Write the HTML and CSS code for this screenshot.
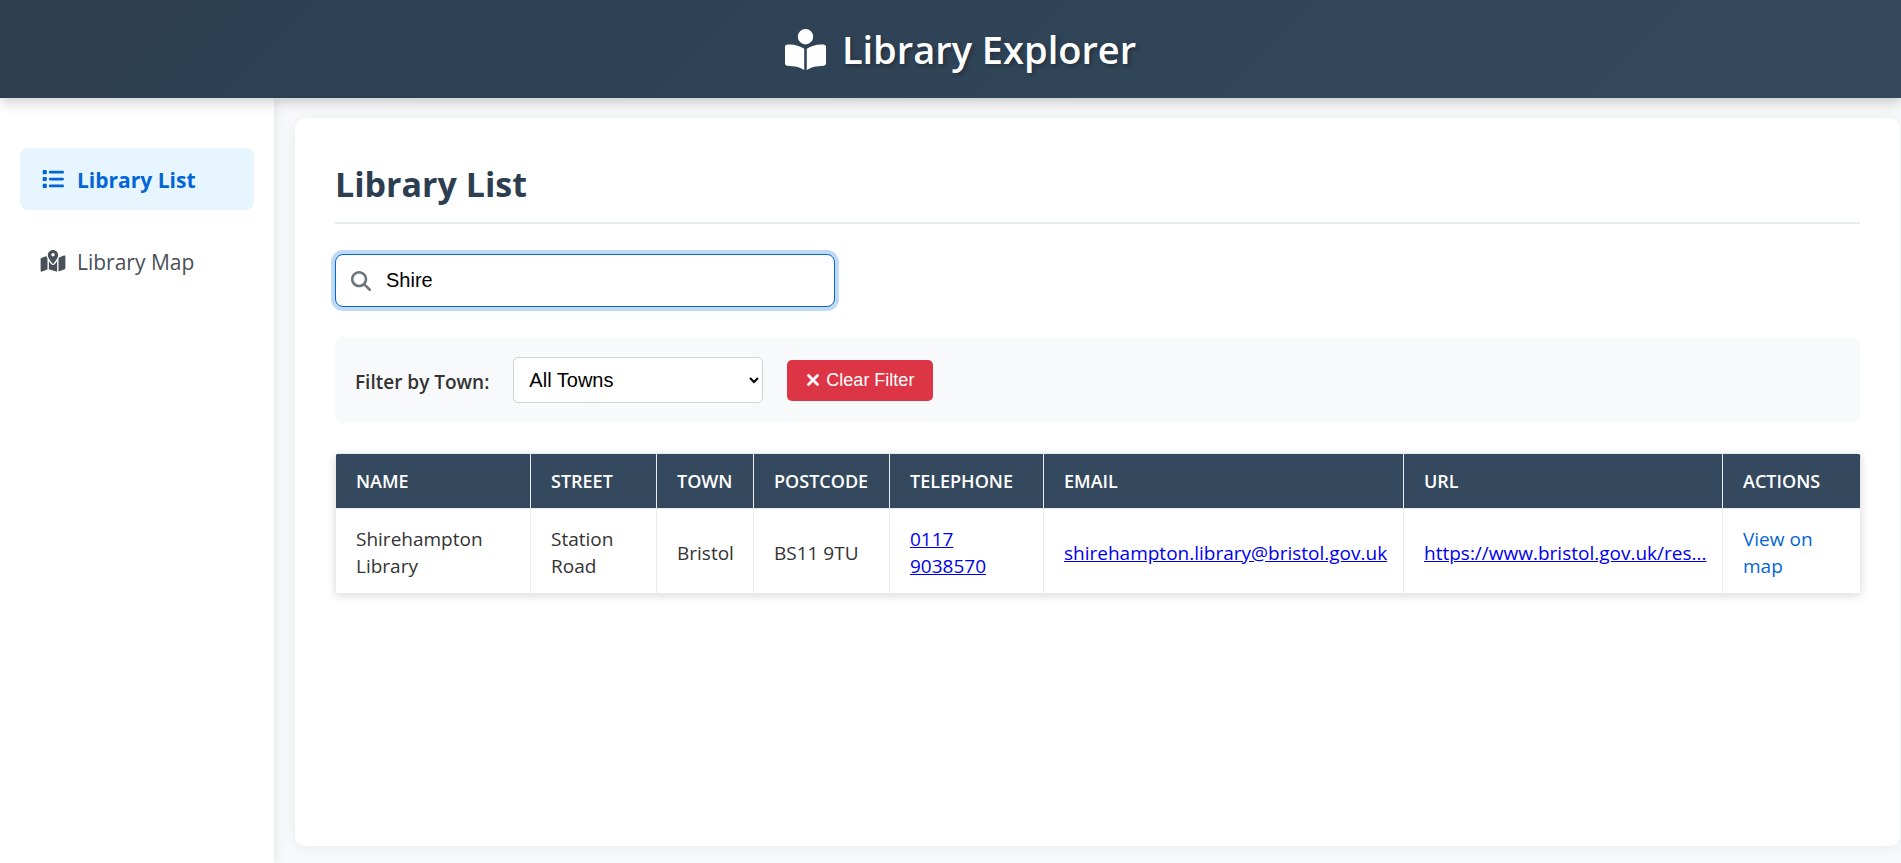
FILE: index.html
```html
<!DOCTYPE html>
<html lang="en">
<head>
<meta charset="utf-8">
<title>Library Explorer</title>
<link rel="stylesheet" href="styles.css">
</head>
<body>
<header class="site-header">
  <svg class="brand-icon" viewBox="0 0 512 512" aria-hidden="true"><path d="M160 96a96 96 0 1 1 192 0A96 96 0 1 1 160 96zm80 152V512l-48.4-24.2c-20.9-10.4-43.5-17-66.8-19.3l-96-9.6C12.5 457.2 0 443.5 0 427V224c0-17.7 14.3-32 32-32H62.3c63.6 0 125.6 19.6 177.7 56zm32 264V248c52.1-36.4 114.1-56 177.7-56H480c17.7 0 32 14.3 32 32V427c0 16.4-12.5 30.2-28.8 31.8l-96 9.6c-23.2 2.3-45.9 8.9-66.8 19.3L272 512z"/></svg>
  <h1 class="brand-title">Library Explorer</h1>
</header>
<div class="layout">
  <nav class="sidebar">
    <a class="nav-link active" href="#list">
      <svg class="nav-icon" viewBox="0 0 512 512" aria-hidden="true"><path d="M40 48C26.700 48 16 58.700 16 72v48c0 13.300 10.700 24 24 24H88c13.300 0 24-10.700 24-24V72c0-13.300-10.700-24-24-24H40zM192 64c-17.700 0-32 14.300-32 32s14.300 32 32 32H480c17.700 0 32-14.300 32-32s-14.300-32-32-32H192zm0 160c-17.700 0-32 14.300-32 32s14.300 32 32 32H480c17.700 0 32-14.300 32-32s-14.300-32-32-32H192zm0 160c-17.700 0-32 14.300-32 32s14.300 32 32 32H480c17.700 0 32-14.300 32-32s-14.300-32-32-32H192zM16 232v48c0 13.300 10.700 24 24 24H88c13.300 0 24-10.700 24-24V232c0-13.300-10.700-24-24-24H40c-13.300 0-24 10.700-24 24zM40 368c-13.300 0-24 10.700-24 24v48c0 13.300 10.700 24 24 24H88c13.300 0 24-10.700 24-24V392c0-13.300-10.700-24-24-24H40z"/></svg>
      <span class="nav-text">Library List</span>
    </a>
    <a class="nav-link" href="#map">
      <svg class="nav-icon" viewBox="0 0 576 512" aria-hidden="true"><path d="M408 120c0 54.6-73.1 151.9-105.2 192c-7.7 9.6-22 9.6-29.600 0C241.1 271.9 168 174.6 168 120C168 53.7 221.7 0 288 0s120 53.7 120 120zm8 80.400c3.500-6.900 6.700-13.800 9.600-20.600c.5-1.200 1-2.500 1.500-3.700l116-46.400C558.9 123.4 576 135 576 152V422.800c0 9.800-6 18.600-15.100 22.300L416 503V200.400zM137.600 138.300c2.400 14.100 7.200 28.300 12.800 41.500c2.900 6.800 6.100 13.700 9.600 20.600V451.800L32.900 502.700C17.100 509 0 497.400 0 480.400V209.600c0-9.800 6-18.600 15.100-22.300l122.600-49zM327.800 332c13.900-17.400 35.700-45.700 56.200-77V504.300L192 449.400V255c20.500 31.300 42.300 59.600 56.200 77c20.500 25.600 59.100 25.600 79.600 0zM288 152a40 40 0 1 0 0-80 40 40 0 1 0 0 80z"/></svg>
      <span class="nav-text">Library Map</span>
    </a>
  </nav>
  <main class="content">
    <section class="card">
      <h2 class="page-title">Library List</h2>
      <div class="search">
        <svg class="search-icon" viewBox="0 0 512 512" aria-hidden="true"><path d="M416 208c0 45.9-14.9 88.3-40 122.700L502.600 457.400c12.500 12.500 12.500 32.800 0 45.300s-32.800 12.500-45.300 0L330.700 376c-34.400 25.200-76.800 40-122.700 40C93.100 416 0 322.900 0 208S93.100 0 208 0S416 93.100 416 208zM208 352a144 144 0 1 0 0-288 144 144 0 1 0 0 288z"/></svg>
        <input class="search-input" type="text" value="Shire" aria-label="Search libraries">
      </div>
      <div class="filters">
        <label class="filter-label" for="town">Filter by Town:</label>
        <select class="filter-select" id="town"><option>All Towns</option><option>Bristol</option></select>
        <button class="clear-button" type="button"><svg class="clear-icon" viewBox="0 0 384 512" aria-hidden="true"><path d="M342.600 150.600c12.500-12.500 12.500-32.800 0-45.300s-32.800-12.500-45.300 0L192 210.700 86.600 105.400c-12.500-12.500-32.800-12.500-45.300 0s-12.500 32.800 0 45.300L146.700 256 41.400 361.400c-12.500 12.500-12.500 32.800 0 45.300s32.800 12.500 45.300 0L192 301.300 297.400 406.600c12.500 12.500 32.800 12.500 45.300 0s12.500-32.800 0-45.300L237.300 256 342.600 150.600z"/></svg>Clear Filter</button>
      </div>
      <table class="libraries">
        <colgroup><col class="c-name"><col class="c-street"><col class="c-town"><col class="c-postcode"><col class="c-phone"><col class="c-email"><col class="c-url"><col class="c-actions"></colgroup>
        <thead>
          <tr><th>Name</th><th>Street</th><th>Town</th><th>Postcode</th><th>Telephone</th><th>Email</th><th>URL</th><th>Actions</th></tr>
        </thead>
        <tbody>
          <tr>
            <td>Shirehampton Library</td>
            <td>Station Road</td>
            <td>Bristol</td>
            <td>BS11 9TU</td>
            <td><a href="tel:01179038570">0117 9038570</a></td>
            <td><a href="mailto:shirehampton.library@bristol.gov.uk">shirehampton.library@bristol.gov.uk</a></td>
            <td><a href="https://www.bristol.gov.uk/">https://www.bristol.gov.uk/res...</a></td>
            <td><a class="map-link" href="#map">View on map</a></td>
          </tr>
        </tbody>
      </table>
    </section>
  </main>
</div>
</body>
</html>
```

FILE: styles.css
```css
* { box-sizing: border-box; }

body {
  margin: 0;
  min-height: 100vh;
  display: flex;
  flex-direction: column;
  background: #f8f9fb;
  color: #333;
  font-family: "Segoe UI", "Open Sans", "Noto Sans", sans-serif;
  font-size: 19px;
  line-height: 27px;
}

svg { fill: currentColor; flex: none; }

.site-header {
  position: relative;
  z-index: 2;
  display: flex;
  align-items: center;
  justify-content: center;
  gap: 16px;
  padding: 20px 20px 20px 40px;
  background: linear-gradient(135deg, #2c3e50, #34495e);
  color: #fff;
  box-shadow: 0 4px 12px rgba(0, 0, 0, 0.2);
}

.brand-icon { width: 41px; height: 41px; }

.brand-title {
  margin: 0;
  font-size: 38px;
  line-height: 58px;
  font-weight: 600;
  text-shadow: 2px 2px 4px rgba(0, 0, 0, 0.3);
}

.layout { flex: 1; display: flex; }

.sidebar {
  position: relative;
  width: 274px;
  flex: none;
  display: flex;
  flex-direction: column;
  gap: 20px;
  padding: 50px 20px;
  background: #fff;
  box-shadow: 2px 0 10px rgba(0, 0, 0, 0.08);
}

.nav-link {
  display: flex;
  align-items: center;
  gap: 11px;
  padding: 15px 20px;
  border-radius: 8px;
  color: #495057;
  font-size: 21px;
  line-height: 30px;
  text-decoration: none;
}

.nav-link.active { background: #e7f5ff; color: #0366d6; font-weight: 700; }

.nav-icon { width: 26px; height: 22px; }
.nav-text { padding-top: 2px; }

.content { flex: 1; min-width: 0; display: flex; padding: 20px 1px 17px 21px; }

.card {
  flex: 1;
  min-width: 0;
  padding: 40px;
  border-radius: 10px;
  background: #fff;
  box-shadow: 0 2px 15px rgba(0, 0, 0, 0.06);
}

.page-title {
  margin: 0 0 30px;
  padding-bottom: 12px;
  border-bottom: 2px solid #e9ecef;
  color: #2c3e50;
  font-size: 34px;
  line-height: 52px;
  font-weight: 700;
}

.search { position: relative; max-width: 500px; margin-bottom: 30px; }

.search-icon {
  position: absolute;
  left: 16px;
  top: 17px;
  width: 20px;
  height: 20px;
  color: #6c757d;
}

.search-input {
  display: block;
  width: 100%;
  height: 53px;
  padding: 0 20px 0 50px;
  border: 1px solid #0366d6;
  border-radius: 8px;
  outline: none;
  background: #fff;
  box-shadow: 0 0 0 4px rgba(3, 102, 214, 0.25);
  color: #000;
  font: 20px "Liberation Sans", Arial, sans-serif;
}

.filters {
  display: flex;
  align-items: center;
  gap: 24px;
  margin-bottom: 30px;
  padding: 20px;
  border-radius: 8px;
  background: #f8f9fa;
}

.filter-label { font-weight: 600; padding-top: 4px; }

.filter-select {
  width: 250px;
  height: 46px;
  padding: 0 11px;
  border: 1px solid #ced4da;
  border-radius: 5px;
  background: #fff;
  color: #000;
  font: 20px "Liberation Sans", Arial, sans-serif;
}

.clear-button {
  display: flex;
  align-items: center;
  gap: 6px;
  height: 41px;
  padding: 0 19px;
  border: 0;
  border-radius: 5px;
  background: #dc3545;
  color: #fff;
  font: 18px "Liberation Sans", Arial, sans-serif;
}

.clear-icon { width: 14px; height: 18px; stroke: currentColor; stroke-width: 20; }

.libraries {
  width: 100%;
  table-layout: fixed;
  border-collapse: collapse;
  border-radius: 5px;
  overflow: hidden;
  box-shadow: 0 2px 8px rgba(0, 0, 0, 0.15);
}

.c-name { width: 195px; }
.c-street { width: 126px; }
.c-town { width: 97px; }
.c-postcode { width: 136px; }
.c-phone { width: 154px; }
.c-email { width: 360px; }
.c-url { width: 319px; }
.c-actions { width: 138px; }

.libraries th,
.libraries td {
  border: 1px solid #e9ecef;
  text-align: left;
}

.libraries th {
  padding: 14px 0 13px 20px;
  background: #34495e;
  color: #fff;
  font-size: 18px;
  font-weight: 600;
  text-transform: uppercase;
}

.libraries td { padding: 17px 16px 13px 20px; }

.libraries td a { color: #0000ee; }
.libraries td .map-link { color: #0366d6; text-decoration: none; }
```
